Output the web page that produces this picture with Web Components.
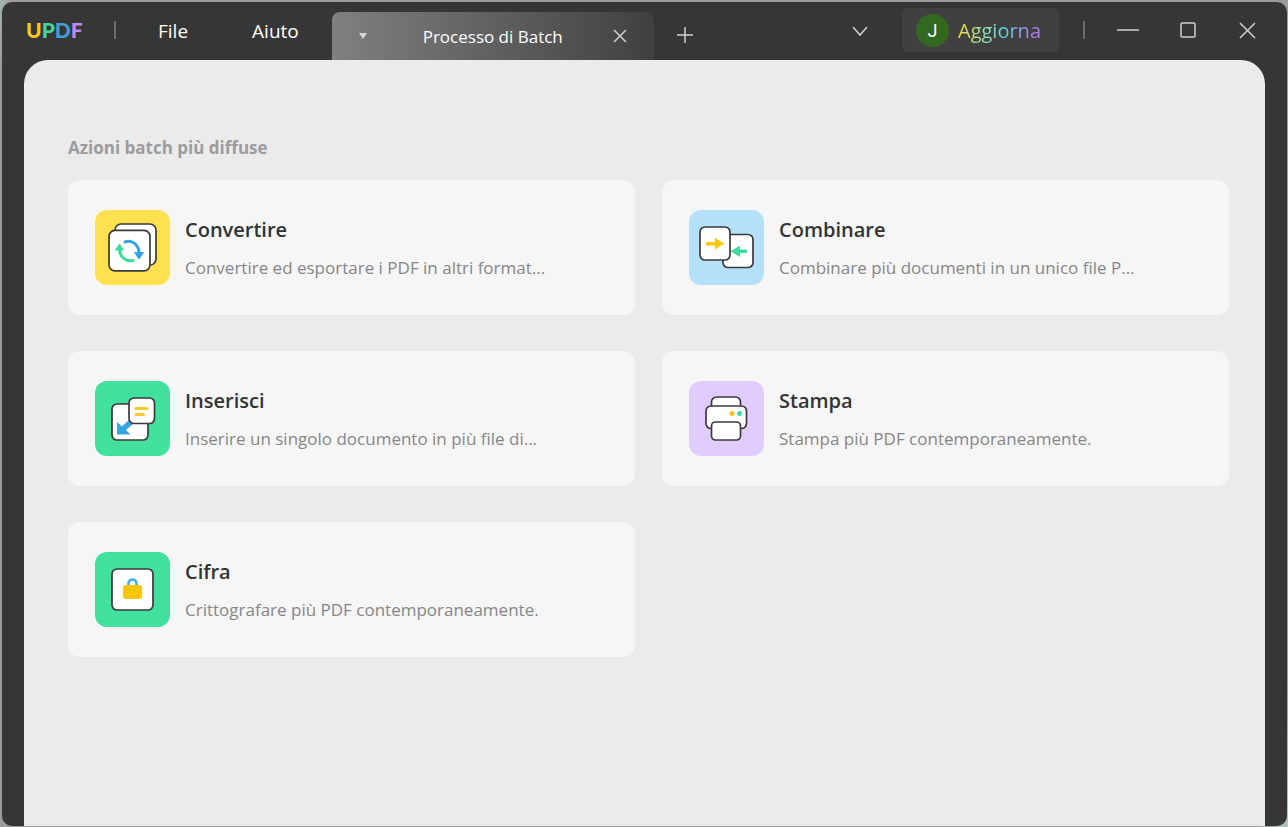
<!DOCTYPE html>
<html lang="it">
<head>
<meta charset="utf-8">
<title>UPDF - Processo di Batch</title>
<style>
html, body { height: 100%; margin: 0; }
body { box-sizing: border-box; padding: 2px 1px 1px 2px; background: linear-gradient(100deg, #a5b3ae 0, #9b9d9d 12px, #9b9d9d 98%, #b4c6c2); font-family: "Open Sans", "Noto Sans", sans-serif; }
</style>
</head>
<body>
<updf-window></updf-window>

<template id="window-template">
<style>
:host { display: flex; flex-direction: column; box-sizing: border-box; height: 100%; padding: 0 22px; background: #363636; border-radius: 10px; overflow: hidden; }
main { flex: 1; min-height: 0; overflow: hidden; background: #ebebeb; border-radius: 24px 24px 0 0; padding: 76px 36px 0 44px; }
h1 { margin: 0 0 20px; font-size: 17px; line-height: 24px; font-weight: 700; color: #9c9c9c; }
.grid { display: grid; grid-template-columns: 1fr 1fr; gap: 36px 27px; }
</style>
<title-bar></title-bar>
<main>
<h1>Azioni batch più diffuse</h1>
<div class="grid">
<batch-card tone="#ffe14f">
<svg slot="icon" viewBox="0 0 75 75" fill="none" aria-hidden="true">
<g fill="#fff" stroke="#3a3a3a" stroke-width="1.7"><rect x="20" y="14" width="41" height="41" rx="6"/><rect x="14" y="20.3" width="41" height="40.5" rx="6"/></g>
<g stroke-width="3" stroke-linecap="round"><path d="M30 32C37 29 44 35 44 43" stroke="#35a4e6"/><path d="M38 50.5C31 52 24.5 47 24.5 39" stroke="#3fdb9d"/></g>
<path d="M39.5 42.5h9L44 49z" fill="#35a4e6" stroke="#35a4e6" stroke-linejoin="round"/><path d="M20.5 40h8l-4-6z" fill="#3fdb9d" stroke="#3fdb9d" stroke-linejoin="round"/>
</svg>
<span slot="title">Convertire</span>Convertire ed esportare i PDF in altri format...
</batch-card>
<batch-card tone="#b5e0fa">
<svg slot="icon" viewBox="0 0 75 75" fill="none" aria-hidden="true">
<g fill="#fff" stroke="#3a3a3a" stroke-width="1.7"><rect x="34" y="24.5" width="30" height="33" rx="5"/><rect x="11" y="17" width="30" height="33" rx="5"/></g>
<path d="M17 32h9v-4l9.500 5.500-9.500 6v-4h-9z" fill="#fdc70c"/><path d="M58 39.500h-7v-4l-9.500 5.800 9.500 5.700v-4h7z" fill="#3fdb9d"/>
</svg>
<span slot="title">Combinare</span>Combinare più documenti in un unico file P...
</batch-card>
<batch-card tone="#41e19d">
<svg slot="icon" viewBox="0 0 75 75" fill="none" aria-hidden="true">
<rect x="17" y="23" width="36" height="36" rx="5" fill="#fff" stroke="#3a3a3a" stroke-width="1.7"/>
<path d="M34 39l4 4-7 6 4.500 4.500H22V41l5 4.500z" fill="#35a4e0"/>
<rect x="34" y="17" width="25.5" height="25.5" rx="5" fill="#fff" stroke="#3a3a3a" stroke-width="1.7"/>
<path d="M41 27.500h11M41 33.500h7.500" stroke="#fdc92d" stroke-width="3" stroke-linecap="round"/>
</svg>
<span slot="title">Inserisci</span>Inserire un singolo documento in più file di...
</batch-card>
<batch-card tone="#e1ccff">
<svg slot="icon" viewBox="0 0 75 75" fill="none" aria-hidden="true">
<g fill="#fff" stroke="#40363f" stroke-width="1.7"><rect x="22.5" y="16" width="29" height="16" rx="5"/><rect x="17" y="25" width="40.5" height="22.5" rx="5"/><rect x="22.5" y="41" width="29" height="18" rx="4"/></g>
<circle cx="43" cy="32.5" r="2.5" fill="#fdc21f"/><circle cx="50.5" cy="32.5" r="2.5" fill="#48d5a3"/>
</svg>
<span slot="title">Stampa</span>Stampa più PDF contemporaneamente.
</batch-card>
<batch-card tone="#41e19d">
<svg slot="icon" viewBox="0 0 75 75" fill="none" aria-hidden="true">
<rect x="17" y="17" width="41" height="41" rx="5" fill="#fff" stroke="#3a3a3a" stroke-width="1.7"/>
<path d="M33.500 35v-3.500c0-5.300 8-5.300 8 0V35" stroke="#48acf0" stroke-width="2.6"/><rect x="28" y="33" width="19" height="14" rx="3" fill="#fdc400"/>
</svg>
<span slot="title">Cifra</span>Crittografare più PDF contemporaneamente.
</batch-card>
</div>
</main>
</template>

<template id="bar-template">
<style>
:host { display: flex; height: 58px; flex: none; color: #fff; }
button { font: inherit; color: inherit; background: none; border: 0; padding: 0; margin: 0; }
svg { display: block; fill: none; stroke: #d0d0d0; stroke-width: 1.5; }
.logo { display: flex; font: 700 21px/56px Lato, sans-serif; padding-left: 2px; width: 88px; }
.logo b:nth-child(1) { color: #fdc81c; } .logo b:nth-child(2) { color: #46d49b; }
.logo b:nth-child(3) { color: #429ddd; } .logo b:nth-child(4) { color: #ba8cf5; }
.rule { width: 2px; height: 18px; background: #6c6c6c; margin-top: 19px; }
nav { display: flex; height: 58px; margin-left: 20px; font-size: 19px; }
nav button { padding: 0 22px; }
nav button + button { margin-left: 20px; }
.tab { display: flex; align-items: center; box-sizing: border-box; width: 322px; height: 48px; margin-top: 10px; padding: 0 24px; border-radius: 8px 8px 0 0; background: linear-gradient(90deg, #808080, #404040); font-size: 17px; margin-left: 11px; }
.tab span { flex: 1; text-align: center; padding-left: 4px; }
.tab .arrow svg { fill: #d8d8d8; stroke: none; }
.add { margin: 8px 0 0 22px; }
.more { margin-left: auto; }
.upgrade { display: flex; align-items: center; gap: 9px; box-sizing: border-box; width: 157px; height: 44px; margin: 6px 24px 0 33px; padding: 0 14px; border-radius: 6px; background: #404040; font-size: 20px; }
.avatar { width: 33px; height: 33px; border-radius: 50%; background: #33691e; font: 18px/33px Roboto, sans-serif; text-align: center; }
.shine { background: linear-gradient(90deg, #f6de3b, #a4e298 25%, #56dce8 55%, #ae7af2 90%); background-clip: text; color: transparent; }
.controls { display: flex; gap: 39px; margin-left: 31px; padding-right: 7px; }
.controls button { height: 56px; }
</style>
<div class="logo" aria-label="UPDF"><b>U</b><b>P</b><b>D</b><b>F</b></div>
<div class="rule"></div>
<nav><button>File</button><button>Aiuto</button></nav>
<div class="tab">
<button class="arrow" aria-label="Opzioni scheda"><svg width="14" height="12" viewBox="0 0 14 12"><path d="M3 3h8L7 9z"/></svg></button>
<span>Processo di Batch</span>
<button aria-label="Chiudi scheda"><svg width="18" height="16" viewBox="0 0 18 16"><path d="M2 2l12 12M14 2L2 14"/></svg></button>
</div>
<button class="add" aria-label="Nuova scheda"><svg width="18" height="18" viewBox="0 0 18 18"><path d="M1 9h16M9 1v16"/></svg></button>
<button class="more" aria-label="Elenco schede"><svg width="18" height="18" viewBox="0 0 18 18"><path d="M2 5l7 8 7-8"/></svg></button>
<button class="upgrade"><span class="avatar">J</span><span class="shine">Aggiorna</span></button>
<div class="rule"></div>
<div class="controls">
<button aria-label="Riduci a icona"><svg width="24" height="20" viewBox="0 0 24 20"><path d="M1 10h22"/></svg></button>
<button aria-label="Ingrandisci"><svg width="18" height="18" viewBox="0 0 18 18"><rect x="2" y="2" width="14" height="14" rx="1"/></svg></button>
<button aria-label="Chiudi"><svg width="22" height="20" viewBox="0 0 22 20"><path d="M4 3l15 15M19 3L4 18"/></svg></button>
</div>
</template>

<template id="card-template">
<style>
:host { display: block; min-width: 0; }
button { display: flex; gap: 15px; box-sizing: border-box; width: 100%; height: 135px; padding: 30px 27px; border: 0; border-radius: 12px; background: #f6f6f6; font: inherit; text-align: left; }
.icon { flex: none; width: 75px; height: 75px; border-radius: 12px; background: var(--tone); }
::slotted(svg) { display: block; width: 75px; height: 75px; }
.text { display: flex; flex-direction: column; gap: 12px; padding-top: 6px; min-width: 0; }
.title { font-size: 20px; line-height: 28px; font-weight: 600; color: #333; }
.desc { font-size: 17px; line-height: 24px; color: #868686; white-space: nowrap; }
</style>
<button><span class="icon"><slot name="icon"></slot></span><span class="text"><span class="title"><slot name="title"></slot></span><span class="desc"><slot></slot></span></span></button>
</template>

<script>
function attach(host, id) {
  const root = host.attachShadow({ mode: "open" });
  root.append(document.importNode(document.getElementById(id).content, true));
  return root;
}
customElements.define("batch-card", class extends HTMLElement {
  constructor() { super(); attach(this, "card-template"); }
  connectedCallback() { this.style.setProperty("--tone", this.getAttribute("tone")); }
});
customElements.define("title-bar", class extends HTMLElement {
  constructor() { super(); attach(this, "bar-template"); }
});
customElements.define("updf-window", class extends HTMLElement {
  constructor() { super(); attach(this, "window-template"); }
});
</script>
</body>
</html>
